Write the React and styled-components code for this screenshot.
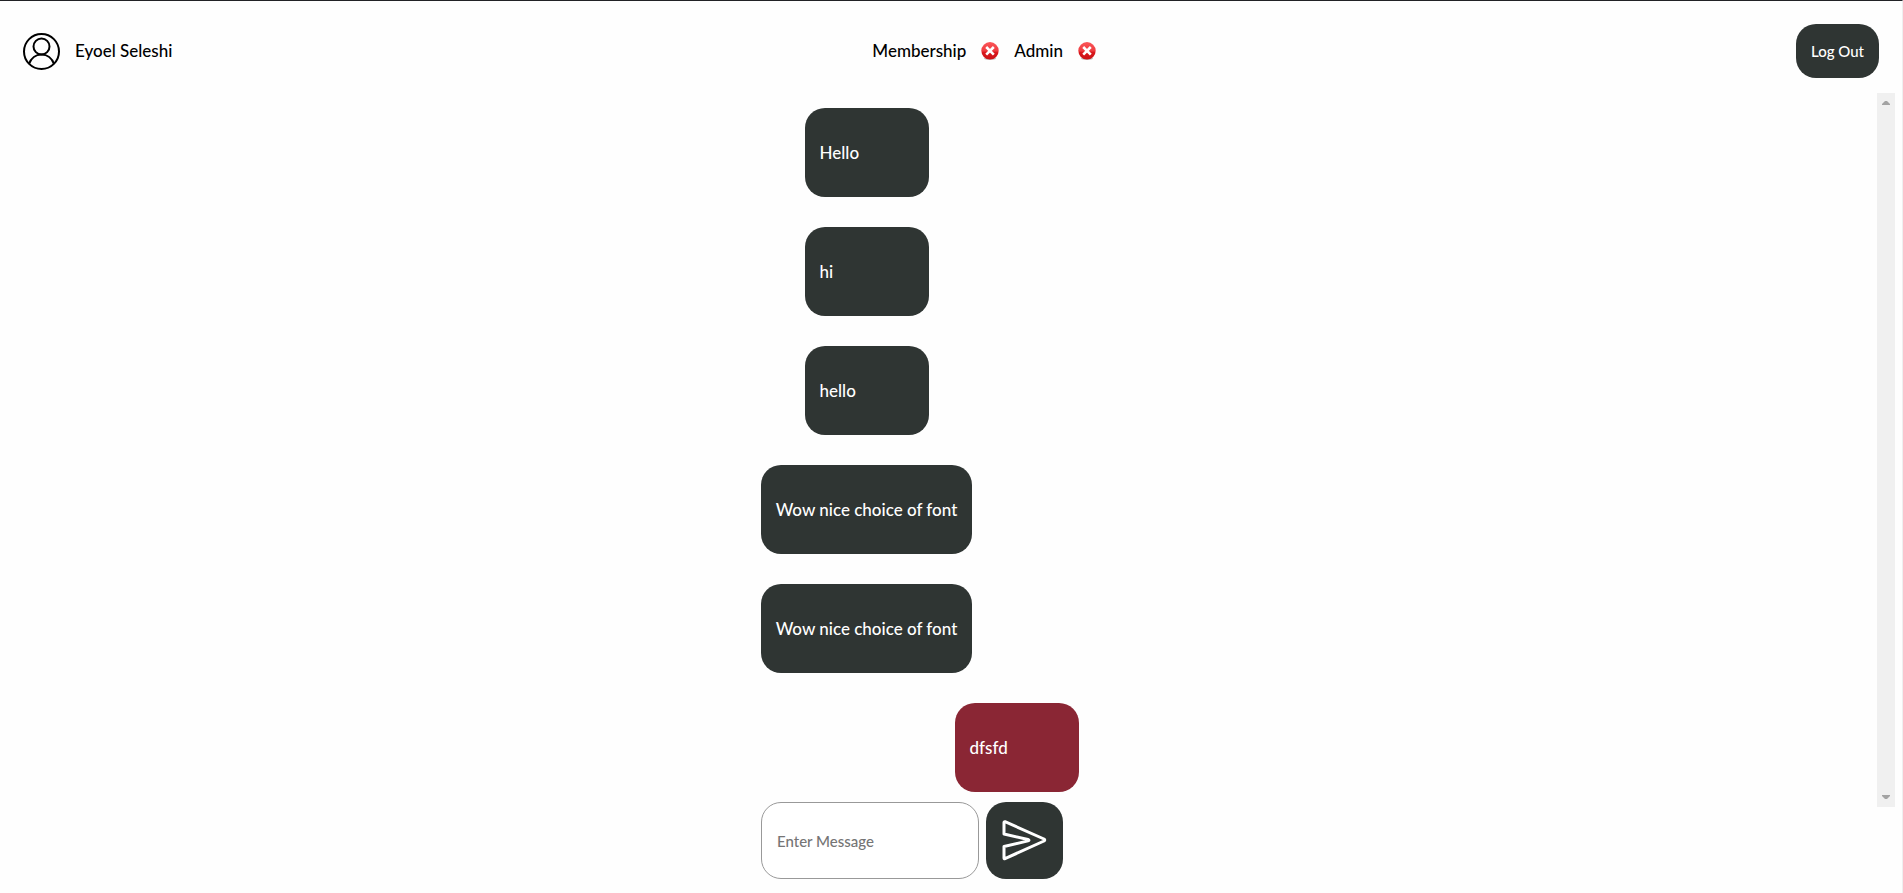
import React, { useState } from "react";
import styled, { createGlobalStyle } from "styled-components";

const GlobalStyle = createGlobalStyle`
  *, *::before, *::after { box-sizing: border-box; }
  body {
    margin: 0;
    background: #fefefe;
    color: #000;
    font-family: Lato, "Open Sans", sans-serif;
    font-size: 17px;
    font-weight: 500;
    line-height: 24px;
  }
`;

const Page = styled.div`
  min-height: 100vh;
  padding: 0 7px 0 8px;
  border-top: 1px solid #212226;
  border-right: 1px solid #efefef;
`;

const Header = styled.header`
  display: flex;
  justify-content: space-between;
  align-items: center;
  height: 92px;
  padding: 8px 16px 0 15px;
`;

const Group = styled.div`
  display: flex;
  align-items: center;
  gap: 15px;
`;

const LogOut = styled.button`
  height: 54px;
  padding: 0 15px;
  border: 0;
  border-radius: 20px;
  background: #2f3533;
  color: #fff;
  font: inherit;
  font-size: 15px;
  cursor: pointer;
`;

const Chat = styled.main`
  display: flex;
  height: 80vh;
`;

const Messages = styled.ul`
  flex: 1;
  display: flex;
  flex-direction: column;
  align-items: center;
  gap: 30px;
  margin: 0;
  padding: 15px 2px 15px 0;
  list-style: none;
  overflow-y: auto;
  scrollbar-width: none;
`;

const Bubble = styled.li`
  flex: none;
  display: flex;
  align-items: center;
  min-width: 124px;
  height: 89px;
  padding: 0 15px;
  border-radius: 20px;
  color: #fff;
  background: ${(p) => (p.$own ? "#8a2634" : "#2f3533")};
  margin-left: ${(p) => (p.$own ? "150px" : "0")};
  margin-right: ${(p) => (p.$own ? "0" : "150px")};
`;

const ScrollTrack = styled.div`
  display: flex;
  flex-direction: column;
  justify-content: space-between;
  align-items: center;
  width: 18px;
  padding: 8px 0;
  background: #f0f0f0;
`;

const Composer = styled.form`
  display: flex;
  justify-content: center;
  gap: 7px;
  margin-top: -5px;
  padding-right: 79px;
`;

const MessageInput = styled.input`
  width: 218px;
  height: 77px;
  padding: 0 15px;
  border: 1px solid #999;
  border-radius: 20px;
  background: #fff;
  font: inherit;
  font-size: 15px;
  &::placeholder { color: #757575; }
`;

const SendButton = styled.button`
  display: grid;
  place-items: center;
  width: 77px;
  height: 77px;
  padding: 0;
  border: 0;
  border-radius: 20px;
  background: #2f3533;
  cursor: pointer;
`;

const UserIcon = () => (
  <svg width="37" height="37" viewBox="0 0 37 37" fill="none" stroke="#000" strokeWidth="2" aria-hidden="true">
    <circle cx="18.5" cy="18.5" r="17.5" />
    <circle cx="18.5" cy="13.5" r="8" />
    <path d="M6 31C8 25 13 21.5 18.5 21.5S29 25 31 31" />
  </svg>
);

const CrossIcon = ({ id }) => (
  <svg width="18" height="18" viewBox="0 0 18 18" role="img" aria-label="No">
    <defs>
      <linearGradient id={id} x1="0" y1="0" x2="0" y2="1">
        <stop offset="0" stopColor="#fb5558" />
        <stop offset="0.5" stopColor="#ee3c40" />
        <stop offset="0.6" stopColor="#d8171c" />
        <stop offset="1" stopColor="#cc1216" />
      </linearGradient>
    </defs>
    <ellipse cx="9" cy="16.5" rx="6" ry="1.5" fill="#bbb" />
    <circle cx="9" cy="8.8" r="8.7" fill={`url(#${id})`} />
    <path d="M5.200 5l7.600 7.600m0-7.600l-7.600 7.600" stroke="#fff" strokeWidth="2.6" />
  </svg>
);

const SendIcon = () => (
  <svg width="46" height="42" viewBox="1 1 46 42" fill="none" stroke="#fff" strokeWidth="3" strokeLinejoin="round" aria-hidden="true">
    <path d="M3 3.5V15l24 5.5q2 .7 0 1.400L3 27.500V39q0 1 1 .6L43 22q1.500-1 0-2L4 2.700Q3 2.500 3 3.500Z" />
  </svg>
);

const Arrow = ({ down }) => (
  <svg width="8" height="4" viewBox="0 0 8 4" fill="#a3a3a3" aria-hidden="true">
    <path d={down ? "M0 0h8v1L5 4H3L0 1Z" : "M0 4h8V3L5 0H3L0 3Z"} />
  </svg>
);

const messages = [
  { text: "Hello" },
  { text: "hi" },
  { text: "hello" },
  { text: "Wow nice choice of font" },
  { text: "Wow nice choice of font" },
  { text: "dfsfd", own: true },
];

export default function App() {
  const [draft, setDraft] = useState("");
  return (
    <Page>
      <GlobalStyle />
      <Header>
        <Group>
          <UserIcon />
          <span>Eyoel Seleshi</span>
        </Group>
        <Group>
          <span>Membership</span>
          <CrossIcon id="membership-cross" />
          <span>Admin</span>
          <CrossIcon id="admin-cross" />
        </Group>
        <LogOut type="button">Log Out</LogOut>
      </Header>
      <Chat>
        <Messages>
          {messages.map((m, i) => (
            <Bubble key={i} $own={m.own}>{m.text}</Bubble>
          ))}
        </Messages>
        <ScrollTrack>
          <Arrow />
          <Arrow down />
        </ScrollTrack>
      </Chat>
      <Composer onSubmit={(e) => e.preventDefault()}>
        <MessageInput
          aria-label="Enter Message"
          placeholder="Enter Message"
          value={draft}
          onChange={(e) => setDraft(e.target.value)}
        />
        <SendButton type="submit" aria-label="Send">
          <SendIcon />
        </SendButton>
      </Composer>
    </Page>
  );
}
